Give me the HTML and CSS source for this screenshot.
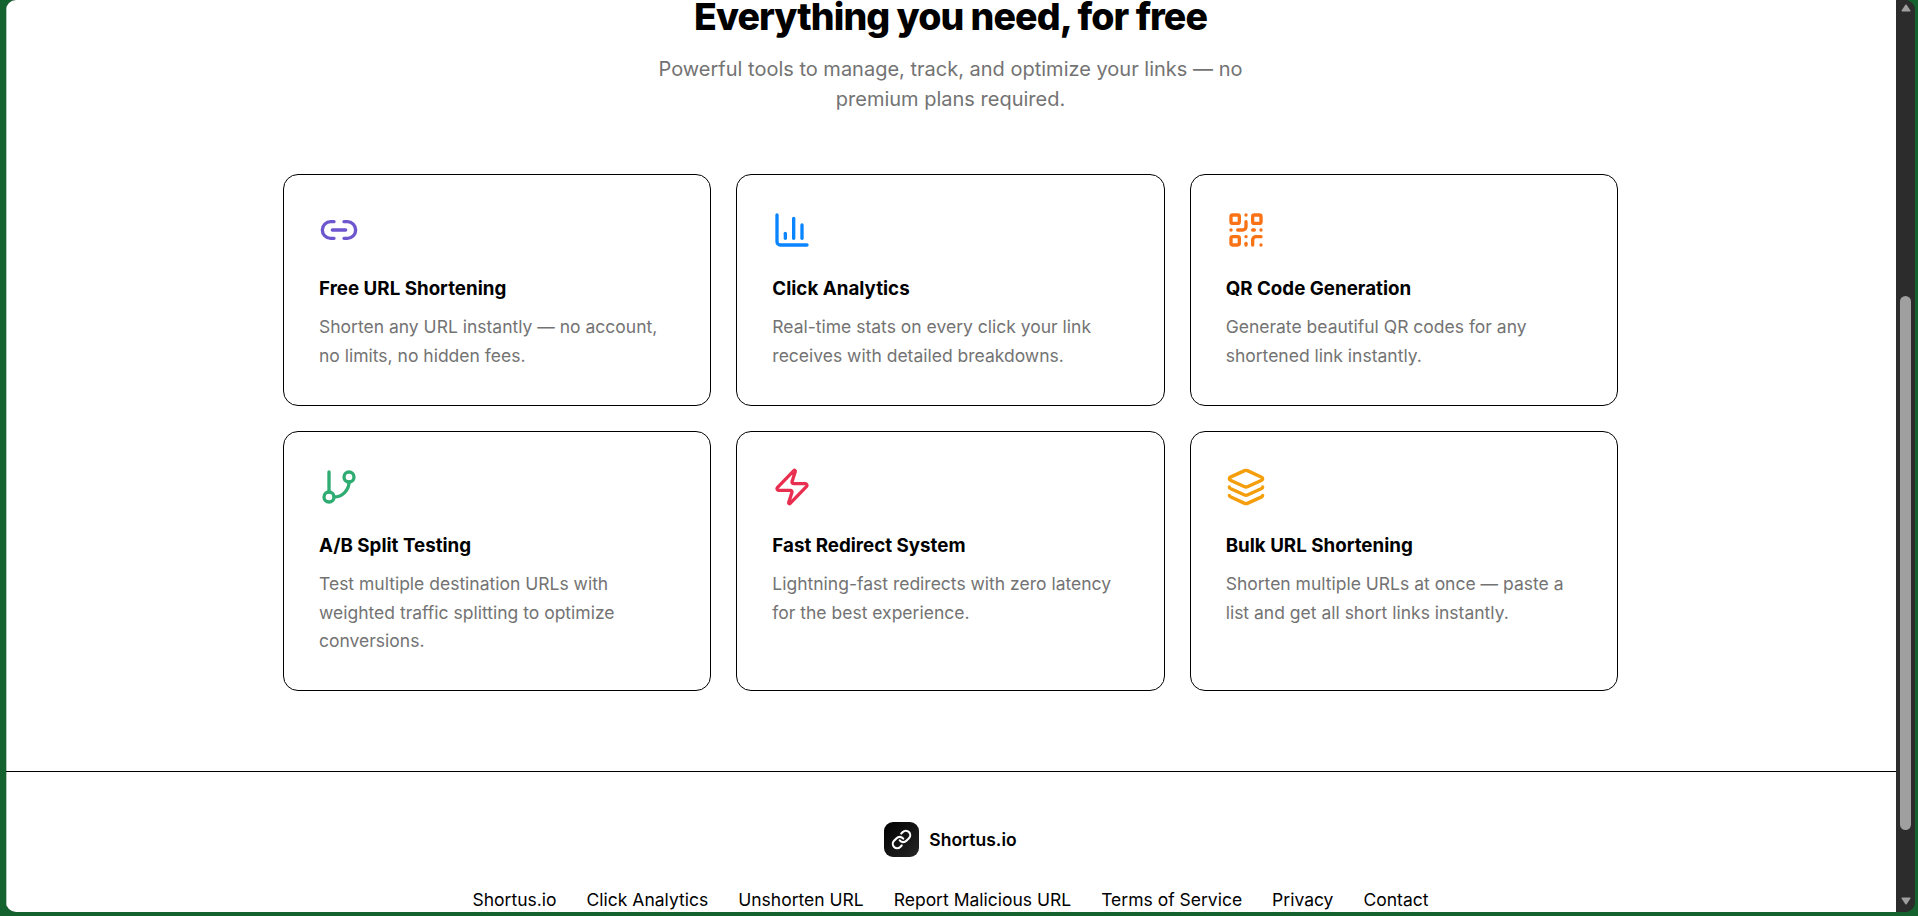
FILE: index.html
```html
<!DOCTYPE html>
<html lang="en">
<head>
    <meta charset="UTF-8">
    <meta name="viewport" content="width=device-width, initial-scale=1.0">
    <title>Shortus.io</title>
    <link rel="stylesheet" href="styles.css">
</head>
<body>

    <div class="window">
        <main class="page">
            <section class="features">
                <div class="section-header">
                    <h2>Everything you need, for free</h2>
                    <p>Powerful tools to manage, track, and optimize your links — no premium plans required.</p>
                </div>

                <div class="features-grid">
                    <div class="card">
                        <svg class="icon purple" viewBox="0 0 24 24">
                            <path d="M9 17H7A5 5 0 0 1 7 7h2"/>
                            <path d="M15 7h2a5 5 0 1 1 0 10h-2"/>
                            <line x1="8" x2="16" y1="12" y2="12"/>
                        </svg>
                        <h3>Free URL Shortening</h3>
                        <p>Shorten any URL instantly — no account, no limits, no hidden fees.</p>
                    </div>
                    <div class="card">
                        <svg class="icon blue" viewBox="0 0 24 24">
                            <path d="M3 3v16a2 2 0 0 0 2 2h16"/>
                            <path d="M18 17V9"/>
                            <path d="M13 17V5"/>
                            <path d="M8 17v-3"/>
                        </svg>
                        <h3>Click Analytics</h3>
                        <p>Real-time stats on every click your link receives with detailed breakdowns.</p>
                    </div>
                    <div class="card">
                        <svg class="icon orange" viewBox="0 0 24 24">
                            <rect width="5" height="5" x="3" y="3" rx="1"/>
                            <rect width="5" height="5" x="16" y="3" rx="1"/>
                            <rect width="5" height="5" x="3" y="16" rx="1"/>
                            <path d="M21 16h-3a2 2 0 0 0-2 2v3"/>
                            <path d="M21 21v.01"/>
                            <path d="M12 7v3a2 2 0 0 1-2 2H7"/>
                            <path d="M3 12h.01"/>
                            <path d="M12 3h.01"/>
                            <path d="M12 16v.01"/>
                            <path d="M16 12h1"/>
                            <path d="M21 12v.01"/>
                            <path d="M12 21v-1"/>
                        </svg>
                        <h3>QR Code Generation</h3>
                        <p>Generate beautiful QR codes for any shortened link instantly.</p>
                    </div>
                    <div class="card">
                        <svg class="icon green" viewBox="0 0 24 24">
                            <line x1="6" x2="6" y1="3" y2="15"/>
                            <circle cx="18" cy="6" r="3"/>
                            <circle cx="6" cy="18" r="3"/>
                            <path d="M18 9a9 9 0 0 1-9 9"/>
                        </svg>
                        <h3>A/B Split Testing</h3>
                        <p>Test multiple destination URLs with weighted traffic splitting to optimize conversions.</p>
                    </div>
                    <div class="card">
                        <svg class="icon red" viewBox="0 0 24 24">
                            <path d="M4 14a1 1 0 0 1-.78-1.63l9.9-10.2a.5.5 0 0 1 .86.46l-1.92 6.02A1 1 0 0 0 13 10h7a1 1 0 0 1 .78 1.63l-9.9 10.2a.5.5 0 0 1-.86-.46l1.92-6.02A1 1 0 0 0 11 14z"/>
                        </svg>
                        <h3>Fast Redirect System</h3>
                        <p>Lightning-fast redirects with zero latency for the best experience.</p>
                    </div>
                    <div class="card">
                        <svg class="icon yellow" viewBox="0 0 24 24">
                            <path d="M12.83 2.18a2 2 0 0 0-1.66 0L2.6 6.08a1 1 0 0 0 0 1.83l8.58 3.91a2 2 0 0 0 1.66 0l8.58-3.9a1 1 0 0 0 0-1.83z"/>
                            <path d="M2 12a1 1 0 0 0 .58.91l8.6 3.91a2 2 0 0 0 1.65 0l8.58-3.9A1 1 0 0 0 22 12"/>
                            <path d="M2 17a1 1 0 0 0 .58.91l8.6 3.91a2 2 0 0 0 1.65 0l8.58-3.9A1 1 0 0 0 22 17"/>
                        </svg>
                        <h3>Bulk URL Shortening</h3>
                        <p>Shorten multiple URLs at once — paste a list and get all short links instantly.</p>
                    </div>
                </div>
            </section>

            <footer class="footer">
                <div class="logo">
                    <span class="logo-mark">
                        <svg viewBox="0 0 24 24">
                            <path d="M10 13a5 5 0 0 0 7.54.54l3-3a5 5 0 0 0-7.07-7.07l-1.72 1.71"/>
                            <path d="M14 11a5 5 0 0 0-7.54-.54l-3 3a5 5 0 0 0 7.07 7.07l1.71-1.71"/>
                        </svg>
                    </span>
                    <span class="logo-text">Shortus.io</span>
                </div>
                <nav class="footer-links">
                    <a>Shortus.io</a>
                    <a>Click Analytics</a>
                    <a>Unshorten URL</a>
                    <a>Report Malicious URL</a>
                    <a>Terms of Service</a>
                    <a>Privacy</a>
                    <a>Contact</a>
                </nav>
            </footer>
        </main>

        <div class="scrollbar">
            <svg class="arrow" viewBox="0 0 10 8"><path d="M5 1.2 8.8 6.8H1.2z"/></svg>
            <div class="thumb"></div>
            <svg class="arrow" viewBox="0 0 10 8"><path d="M5 6.8 8.8 1.2H1.2z"/></svg>
        </div>
    </div>

</body>
</html>
```
FILE: styles.css
```css
* {
    box-sizing: border-box;
    margin: 0;
    padding: 0;
}
body {
    height: 100vh;
    padding: 0 3px 4px 6px;
    font-family: Inter, sans-serif;
    color: #000;
    background: #14632f;
    overflow: hidden;
}
.window {
    display: flex;
    height: 912px;
    border-radius: 10px;
    overflow: hidden;
    background: #2c2c2c;
}
.page {
    flex: 1;
    height: 912px;
    overflow: hidden;
    background: #fff;
    box-shadow: inset 1px 0 #b4c9b9;
}
.features {
    width: 1336px;
    margin: 0 auto;
    padding: 0 1px 80px 0;
}
.section-header {
    width: 600px;
    margin: 0 auto 60px;
    text-align: center;
}
.section-header h2 {
    font-size: 37.5px;
    font-weight: 800;
    line-height: 34px;
    letter-spacing: -0.025em;
}
.section-header p {
    margin-top: 20px;
    font-size: 20px;
    line-height: 30px;
    color: #737373;
}
.features-grid {
    display: grid;
    grid-template-columns: repeat(3, 1fr);
    gap: 25px;
}
.card {
    padding: 35px 35px 34.7px;
    border: 1px solid #000;
    border-radius: 15px;
}
.icon {
    display: block;
    width: 40px;
    height: 40px;
    margin-bottom: 25px;
    fill: none;
    stroke: currentColor;
    stroke-width: 2;
    stroke-linecap: round;
    stroke-linejoin: round;
}
.purple { color: #6e56cf; }
.blue { color: #0a84ff; }
.orange { color: #f97316; }
.green { color: #2eac72; }
.red { color: #e92f50; }
.yellow { color: #f59e0b; }
.card h3 {
    margin-bottom: 10.3px;
    font-size: 18.75px;
    font-weight: 700;
    line-height: 28px;
}
.card p {
    font-size: 17.5px;
    line-height: 28.4375px;
    color: #737373;
}
.footer {
    padding: 50px 1px 0 0;
    border-top: 1px solid #000;
}
.logo {
    display: flex;
    align-items: center;
    justify-content: center;
    gap: 10px;
    margin-bottom: 30px;
}
.logo-mark {
    display: flex;
    align-items: center;
    justify-content: center;
    width: 35px;
    height: 35px;
    border-radius: 9px;
    background: linear-gradient(135deg, #000, #262626);
}
.logo-mark svg {
    width: 21px;
    height: 21px;
    fill: none;
    stroke: #fff;
    stroke-width: 2.4;
    stroke-linecap: round;
    stroke-linejoin: round;
}
.logo-text {
    font-size: 17.5px;
    font-weight: 600;
}
.footer-links {
    display: flex;
    justify-content: center;
    gap: 30px;
    font-size: 17.5px;
    line-height: 26px;
}
.scrollbar {
    display: flex;
    flex-direction: column;
    align-items: center;
    width: 19px;
    padding: 4px 0 7px;
    background: #2c2c2c;
}
.arrow {
    width: 10px;
    height: 8px;
    fill: #9f9f9f;
    stroke: #9f9f9f;
    stroke-width: 1.5;
    stroke-linejoin: round;
}
.thumb {
    width: 11px;
    height: 534px;
    margin: 284px 0 auto;
    border-radius: 6px;
    background: #9f9f9f;
}
```
